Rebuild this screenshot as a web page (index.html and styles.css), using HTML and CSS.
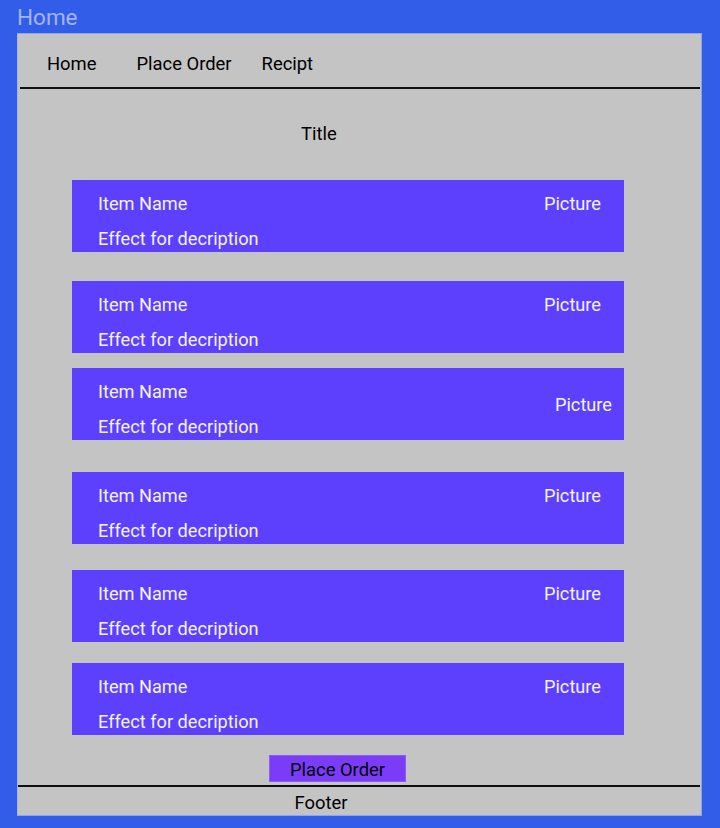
FILE: index.html
```html
<!DOCTYPE html>
<html>
<head>
<meta charset="utf-8">
<title>Home</title>
<link rel="stylesheet" href="styles.css">
</head>
<body>
<header class="top">Home</header>
<div class="panel">
  <nav class="nav">
    <a class="nav-link nav-home">Home</a>
    <a class="nav-link nav-order">Place Order</a>
    <a class="nav-link nav-recipt">Recipt</a>
  </nav>
  <main class="content">
    <h1 class="title">Title</h1>
    <div class="items">
      <div class="card c1">
        <div class="card-text"><span class="name">Item Name</span><span class="desc">Effect for decription</span></div>
        <span class="pic">Picture</span>
      </div>
      <div class="card c2">
        <div class="card-text"><span class="name">Item Name</span><span class="desc">Effect for decription</span></div>
        <span class="pic">Picture</span>
      </div>
      <div class="card c3 card-center">
        <div class="card-text"><span class="name">Item Name</span><span class="desc">Effect for decription</span></div>
        <span class="pic">Picture</span>
      </div>
      <div class="card c4">
        <div class="card-text"><span class="name">Item Name</span><span class="desc">Effect for decription</span></div>
        <span class="pic">Picture</span>
      </div>
      <div class="card c5">
        <div class="card-text"><span class="name">Item Name</span><span class="desc">Effect for decription</span></div>
        <span class="pic">Picture</span>
      </div>
      <div class="card c6">
        <div class="card-text"><span class="name">Item Name</span><span class="desc">Effect for decription</span></div>
        <span class="pic">Picture</span>
      </div>
    </div>
    <div class="actions"><button class="order-btn">Place Order</button></div>
  </main>
  <footer class="footer">Footer</footer>
</div>
</body>
</html>
```
FILE: styles.css
```css
* { box-sizing: border-box; }
html, body { margin: 0; padding: 0; }
body {
  background: #315de9;
  font-family: Roboto, "Liberation Sans", sans-serif;
  width: 720px;
  height: 828px;
  overflow: hidden;
}
.top {
  height: 33px;
  padding-left: 17px;
  font-size: 22.5px;
  line-height: 35px;
  color: #a3b4f5;
}
.panel {
  margin-left: 17px;
  width: 685px;
  height: 783px;
  background: #c4c4c4;
  border: 1px solid #8fa2ea;
  border-left-color: #a8b4de;
  display: flex;
  flex-direction: column;
}
.nav {
  margin: 0 1px 0 2px;
  height: 55px;
  border-bottom: 2px solid #111;
  display: flex;
  align-items: center;
  padding-left: 27px;
  padding-top: 5px;
}
.nav-link {
  font-size: 18.4px;
  color: #000;
}
.nav-home { margin-right: 40px; }
.nav-order { margin-right: 30px; }
.content {
  flex: 1;
  display: flex;
  flex-direction: column;
}
.title {
  margin: 0;
  font-size: 18.4px;
  font-weight: 400;
  line-height: 22px;
  padding-top: 34px;
  padding-left: 283px;
  color: #000;
}
.items {
  margin-top: 35px;
  margin-left: 54px;
  width: 552px;
  display: flex;
  flex-direction: column;
}
.card {
  height: 72px;
  background: #5d40fd;
  color: #f4f2ff;
  font-size: 18.2px;
  display: flex;
  justify-content: space-between;
  align-items: flex-start;
  padding: 13px 23px 0 26px;
}
.card-text {
  display: flex;
  flex-direction: column;
  gap: 13px;
}
.card-text span, .pic { line-height: 22px; }
.card-center { align-items: center; padding-top: 0; padding-right: 12px; }
.card-center .card-text { padding-top: 13px; align-self: flex-start; }
.card-center .pic { margin-top: 2px; }
.c2 { margin-top: 29px; }
.c3 { margin-top: 15px; }
.c4 { margin-top: 32px; }
.c5 { margin-top: 26px; }
.c6 { margin-top: 21px; }
.actions {
  margin-top: 20px;
  padding-left: 251px;
  display: flex;
}
.order-btn {
  width: 137px;
  height: 27px;
  background: #7a3cf9;
  border: 1px solid #8e5cf0;
  font-family: Roboto, "Liberation Sans", sans-serif;
  font-size: 18.4px;
  color: #000;
  padding: 1px 0 0;
  line-height: 26px;
}
.footer {
  margin: 3px 1px 0 0;
  height: 30px;
  border-top: 2px solid #111;
  font-size: 18.4px;
  line-height: 31px;
  text-align: center;
  padding-right: 76px;
  color: #000;
}
```
